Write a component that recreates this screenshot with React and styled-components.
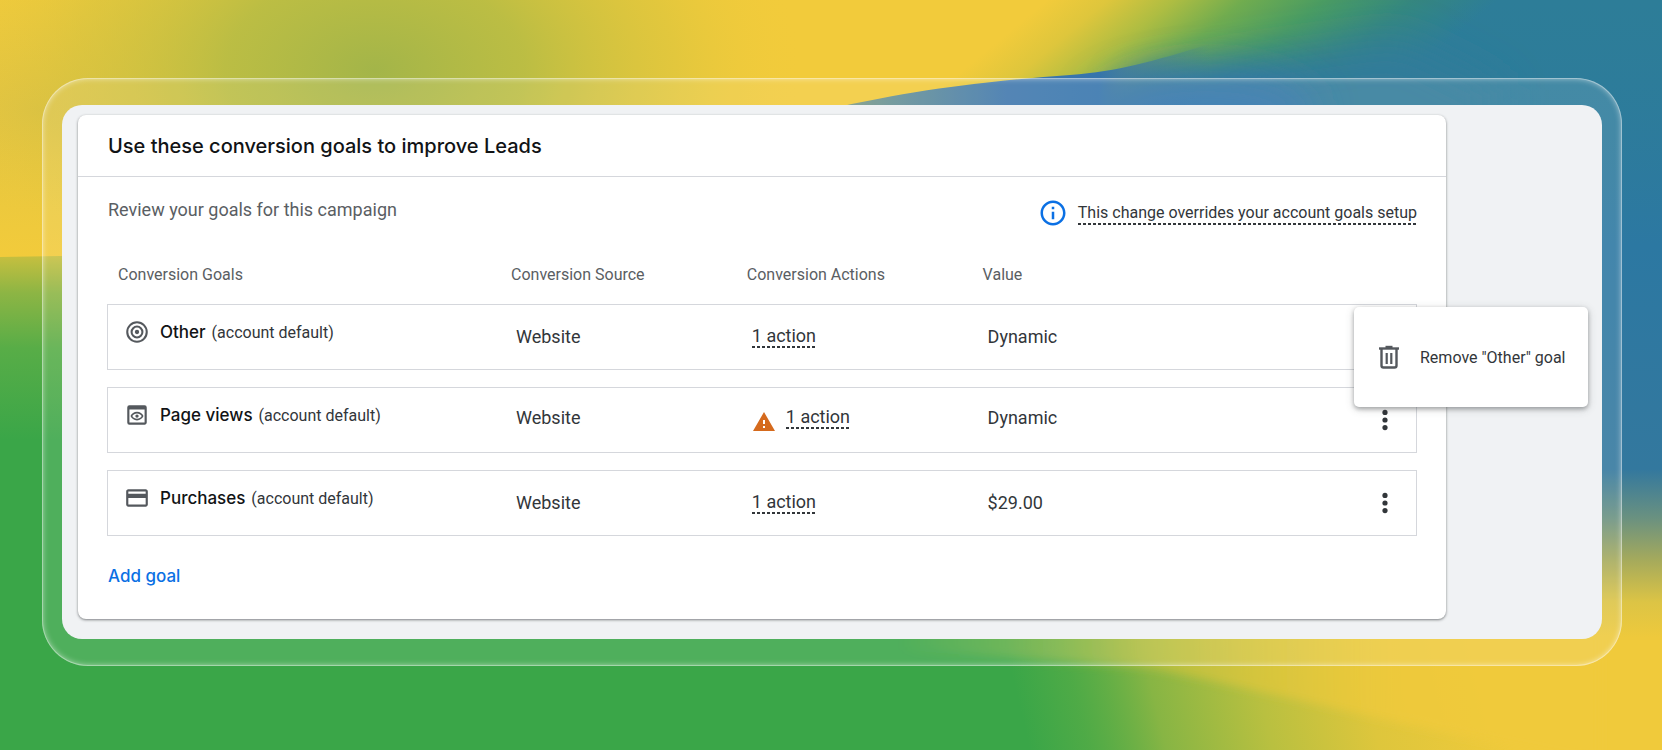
import React from "react";
import styled, { createGlobalStyle } from "styled-components";
import { MdCreditCard, MdInfoOutline, MdOutlinePreview, MdWarning } from "react-icons/md";

const GlobalStyle = createGlobalStyle`
  *, *::before, *::after { box-sizing: border-box; }
  html, body { margin: 0; min-height: 100%; background: #3aa648; }
  body { font-family: Roboto, "Liberation Sans", sans-serif; color: #32363a; }
  button { font: inherit; color: inherit; background: none; border: 0; padding: 0; cursor: pointer; }
`;

const Stage = styled.div`
  position: relative;
  isolation: isolate;
  min-height: 100vh;
  padding: 78px 40px 84px 42px;
`;

const Wallpaper = styled.svg`
  position: absolute;
  inset: 0;
  z-index: -1;
  width: 100%;
  height: 100%;
  display: block;
`;

const GlassFrame = styled.div`
  padding: 27px 20px;
  border-radius: 46px;
  background: rgba(255, 255, 255, 0.11);
  box-shadow: inset 0 0 0 1px rgba(255, 255, 255, 0.3), inset 0 0 6px rgba(255, 255, 255, 0.65);
`;

const Panel = styled.main`
  padding: 10px 156px 20px 16px;
  border-radius: 20px;
  background: #f0f2f4;
`;

const Card = styled.section`
  border-radius: 8px;
  background: #fff;
  box-shadow: 0 1px 3px rgba(60, 64, 67, 0.45), 0 1px 2px rgba(60, 64, 67, 0.25);
`;

const CardTitle = styled.h1`
  margin: 0;
  padding: 17px 30px 15px;
  border-bottom: 1px solid #d5d7dc;
  font: 500 20px/29px Inter, sans-serif;
  color: #111315;
`;

const CardBody = styled.div`
  padding: 20px 29px 30px;
`;

const Intro = styled.div`
  display: flex;
  justify-content: space-between;
  align-items: flex-start;
`;

const IntroText = styled.p`
  margin: 0;
  padding-left: 1px;
  font-size: 18px;
  line-height: 26px;
  color: #5a5e63;
`;

const Notice = styled.div`
  display: flex;
  align-items: center;
  gap: 10px;
  height: 32px;
  font-size: 16px;
  svg { width: 30px; height: 30px; color: #0b70e4; }
`;

const DashedLink = styled.a`
  padding-bottom: 1px;
  line-height: 22px;
  color: inherit;
  text-decoration: none;
  background: repeating-linear-gradient(90deg, #32363a 0 3px, transparent 3px 5px) left bottom / 100% 2px no-repeat;
`;

const GoalTable = styled.table`
  width: 100%;
  margin-top: 17px;
  table-layout: fixed;
  border-collapse: separate;
  border-spacing: 0 17px;
`;

const HeadCell = styled.th`
  width: ${(p) => p.$width};
  height: 24px;
  padding: 0 11px;
  text-align: left;
  font-size: 16px;
  font-weight: 400;
  line-height: 24px;
  color: #5a5e63;
`;

const Cell = styled.td`
  position: relative;
  height: 66px;
  padding: 0 16px ${(p) => (p.$raised ? 6 : 2)}px;
  border: solid #d5d7dc;
  border-width: 1px 0;
  vertical-align: middle;
  font-size: 18px;
  &:first-child { border-left-width: 1px; padding: 0 16px 11px; }
  &:last-child { border-right-width: 1px; padding: 0 18px; }
`;

const Goal = styled.div`
  display: flex;
  align-items: center;
  gap: 10px;
  font-size: 16px;
  white-space: nowrap;
  svg { width: 26px; height: 26px; flex: none; color: #54585d; }
`;

const GoalName = styled.strong`
  margin-right: 2px;
  font: 500 17px/24px Inter, sans-serif;
  color: #111315;
`;

const Actions = styled.div`
  display: flex;
  align-items: center;
  gap: 10px;
`;

const WarningIcon = styled(MdWarning)`
  width: 24px;
  height: 24px;
  margin-top: 10px;
  color: #d56a1d;
`;

const MoreButton = styled.button`
  display: block;
  width: 26px;
  height: 32px;
  margin-left: auto;
  svg { display: block; width: 26px; height: 32px; }
`;

const Menu = styled.div`
  position: absolute;
  z-index: 2;
  top: 2px;
  right: -172px;
  width: 234px;
  padding: 25px 0;
  border-radius: 5px;
  background: #fff;
  box-shadow: 0 2px 4px rgba(60, 64, 67, 0.4), 0 2px 10px rgba(60, 64, 67, 0.2);
`;

const MenuItem = styled.button`
  display: flex;
  align-items: center;
  gap: 18px;
  width: 100%;
  height: 50px;
  padding: 0 22px;
  font-size: 16px;
  white-space: nowrap;
  svg { width: 26px; height: 26px; flex: none; color: #54585d; }
`;

const AddButton = styled.button`
  margin: 10px 0 0 1px;
  font: 500 17px/26px Inter, sans-serif;
  color: #0b70e4;
`;

const TargetIcon = () => (
  <svg viewBox="0 0 24 24" fill="none" stroke="currentColor" strokeWidth="1.9" aria-hidden="true">
    <circle cx="12" cy="12" r="9" />
    <circle cx="12" cy="12" r="5" />
    <circle cx="12" cy="12" r="2" fill="currentColor" stroke="none" />
  </svg>
);

const TrashIcon = () => (
  <svg viewBox="0 0 26 26" fill="none" stroke="currentColor" aria-hidden="true">
    <path d="M3 4.5h20" strokeWidth="2.4" />
    <path d="M9.5 3h7" strokeWidth="2.4" />
    <path d="M5.5 5v16.5a2 2 0 0 0 2 2h11a2 2 0 0 0 2-2V5" strokeWidth="2.4" />
    <path d="M10.7 9v11M15.3 9v11" strokeWidth="2.2" />
  </svg>
);

const DotsIcon = () => (
  <svg viewBox="0 0 26 32" fill="currentColor" aria-hidden="true">
    <circle cx="13" cy="8.4" r="2.6" />
    <circle cx="13" cy="16" r="2.6" />
    <circle cx="13" cy="23.6" r="2.6" />
  </svg>
);

const Background = () => (
  <Wallpaper viewBox="0 0 1662 750" preserveAspectRatio="none" aria-hidden="true">
    <defs>
      <radialGradient id="olive">
        <stop offset="0" stopColor="#a3b549" />
        <stop offset="0.35" stopColor="#b2bb45" stopOpacity="0.85" />
        <stop offset="0.7" stopColor="#cfc23f" stopOpacity="0.45" />
        <stop offset="1" stopColor="#f2cb3b" stopOpacity="0" />
      </radialGradient>
      <radialGradient id="sand">
        <stop offset="0" stopColor="#d2bd48" stopOpacity="0.7" />
        <stop offset="1" stopColor="#e2c540" stopOpacity="0" />
      </radialGradient>
      <linearGradient id="leftGreen" gradientUnits="userSpaceOnUse" x1="0" y1="256" x2="0" y2="440">
        <stop offset="0" stopColor="#c6bf3f" />
        <stop offset="0.2" stopColor="#8db544" />
        <stop offset="0.5" stopColor="#58ad47" />
        <stop offset="1" stopColor="#3aa648" />
      </linearGradient>
      <linearGradient id="sky" gradientUnits="userSpaceOnUse" x1="1062" y1="-28" x2="1254" y2="203">
        <stop offset="0.04" stopColor="#f2cb3b" />
        <stop offset="0.17" stopColor="#dec63c" />
        <stop offset="0.31" stopColor="#aebd42" />
        <stop offset="0.46" stopColor="#70ac4f" />
        <stop offset="0.63" stopColor="#4a9c62" />
        <stop offset="0.82" stopColor="#35877f" />
        <stop offset="1" stopColor="#2d7d98" />
      </linearGradient>
      <linearGradient id="rightBlue" gradientUnits="userSpaceOnUse" x1="0" y1="0" x2="0" y2="700">
        <stop offset="0" stopColor="#2d7b9c" stopOpacity="0" />
        <stop offset="0.35" stopColor="#2c78a2" />
        <stop offset="0.67" stopColor="#33789e" />
        <stop offset="0.74" stopColor="#6a9180" />
        <stop offset="0.8" stopColor="#a5aa5c" />
        <stop offset="0.86" stopColor="#dcc445" />
        <stop offset="0.91" stopColor="#eec93c" />
        <stop offset="1" stopColor="#f0ca3b" />
      </linearGradient>
      <linearGradient id="swoosh" gradientUnits="userSpaceOnUse" x1="840" y1="0" x2="1210" y2="0">
        <stop offset="0" stopColor="#7f9a80" />
        <stop offset="0.15" stopColor="#648f95" />
        <stop offset="0.45" stopColor="#3f77ac" />
        <stop offset="0.7" stopColor="#3574ac" />
        <stop offset="1" stopColor="#3374ac" stopOpacity="0" />
      </linearGradient>
      <linearGradient id="bottomGold" gradientUnits="userSpaceOnUse" x1="1030" y1="750" x2="1490" y2="640">
        <stop offset="0" stopColor="#5fae45" stopOpacity="0" />
        <stop offset="0.12" stopColor="#5fae45" stopOpacity="0.55" />
        <stop offset="0.28" stopColor="#87b544" />
        <stop offset="0.5" stopColor="#b9c040" />
        <stop offset="0.72" stopColor="#dec63c" />
        <stop offset="1" stopColor="#f0ca3b" />
      </linearGradient>
      <linearGradient id="bottomEdge" gradientUnits="userSpaceOnUse" x1="900" y1="0" x2="1400" y2="0">
        <stop offset="0" stopColor="#d6c540" stopOpacity="0" />
        <stop offset="0.5" stopColor="#dcc63c" stopOpacity="0.5" />
        <stop offset="1" stopColor="#f0ca3b" stopOpacity="0.8" />
      </linearGradient>
      <filter id="soft" x="-30%" y="-80%" width="160%" height="260%">
        <feGaussianBlur stdDeviation="20" />
      </filter>
      <filter id="edge" x="-10%" y="-30%" width="120%" height="160%">
        <feGaussianBlur stdDeviation="5" />
      </filter>
    </defs>
    <rect width="1662" height="750" fill="#f2cb3b" />
    <ellipse cx="40" cy="110" rx="260" ry="150" fill="url(#sand)" />
    <ellipse cx="375" cy="70" rx="430" ry="280" fill="url(#olive)" />
    <rect x="800" y="-10" width="862" height="300" fill="url(#sky)" />
    <rect x="1450" y="0" width="212" height="750" fill="url(#rightBlue)" />
    <path d="M1130 85L1240 62L1400 40L1500 90V180H1130Z" fill="#317c9a" filter="url(#soft)" />
    <ellipse cx="1205" cy="115" rx="110" ry="42" fill="#3374ac" filter="url(#soft)" />
    <path d="M825 110C920 88 1000 80 1070 75C1120 71 1150 62 1210 44V160H825Z" fill="url(#swoosh)" />
    <path d="M0 257L300 252V600H1500V750H0Z" fill="url(#leftGreen)" />
    <rect x="900" y="636" width="762" height="114" fill="url(#bottomGold)" />
    <path d="M900 600H1600V760H1580C1400 726 1290 696 1150 668L900 650Z" fill="url(#bottomEdge)" filter="url(#edge)" />
    <rect x="1500" y="500" width="162" height="140" fill="url(#rightBlue)" />
  </Wallpaper>
);

const goals = [
  { name: "Other", Icon: TargetIcon, value: "Dynamic", menuOpen: true },
  { name: "Page views", Icon: MdOutlinePreview, value: "Dynamic", warning: true },
  { name: "Purchases", Icon: MdCreditCard, value: "$29.00" },
];

function GoalRow({ goal }) {
  const { name, Icon, value, warning, menuOpen } = goal;
  return (
    <tr>
      <Cell>
        <Goal>
          <Icon />
          <span>
            <GoalName>{name}</GoalName> (account default)
          </span>
        </Goal>
      </Cell>
      <Cell $raised={warning}>Website</Cell>
      <Cell $raised={warning}>
        <Actions>
          {warning && <WarningIcon aria-label="Warning" />}
          <DashedLink href="#actions">1 action</DashedLink>
        </Actions>
      </Cell>
      <Cell $raised={warning}>{value}</Cell>
      <Cell>
        <MoreButton type="button" aria-label={`Options for ${name}`} aria-expanded={!!menuOpen}>
          <DotsIcon />
        </MoreButton>
        {menuOpen && (
          <Menu role="menu">
            <MenuItem type="button" role="menuitem">
              <TrashIcon />
              Remove "{name}" goal
            </MenuItem>
          </Menu>
        )}
      </Cell>
    </tr>
  );
}

export default function App() {
  return (
    <Stage>
      <GlobalStyle />
      <Background />
      <GlassFrame>
        <Panel>
          <Card>
            <CardTitle>Use these conversion goals to improve Leads</CardTitle>
            <CardBody>
              <Intro>
                <IntroText>Review your goals for this campaign</IntroText>
                <Notice>
                  <MdInfoOutline aria-hidden="true" />
                  <DashedLink href="#setup">This change overrides your account goals setup</DashedLink>
                </Notice>
              </Intro>
              <GoalTable>
                <thead>
                  <tr>
                    <HeadCell $width="30%">Conversion Goals</HeadCell>
                    <HeadCell $width="18%">Conversion Source</HeadCell>
                    <HeadCell $width="18%">Conversion Actions</HeadCell>
                    <HeadCell $width="26%">Value</HeadCell>
                    <HeadCell $width="8%" aria-label="Options" />
                  </tr>
                </thead>
                <tbody>
                  {goals.map((goal) => (
                    <GoalRow key={goal.name} goal={goal} />
                  ))}
                </tbody>
              </GoalTable>
              <AddButton type="button">Add goal</AddButton>
            </CardBody>
          </Card>
        </Panel>
      </GlassFrame>
    </Stage>
  );
}
